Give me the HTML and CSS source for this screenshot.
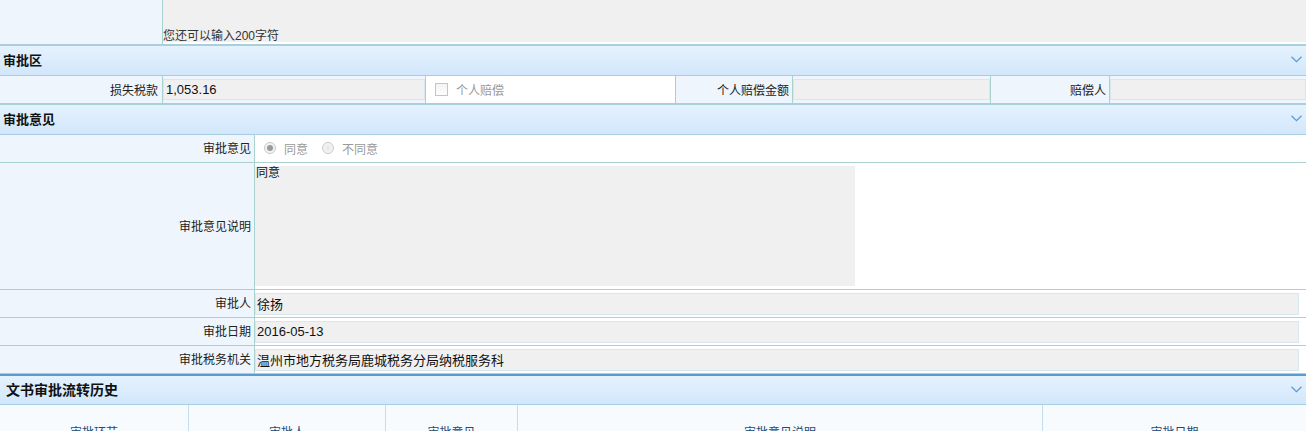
FILE: index.html
```html
<!DOCTYPE html>
<html lang="zh-CN">
<head>
<meta charset="utf-8">
<link rel="stylesheet" href="styles.css">
</head>
<body>
<div class="top-row">
  <div class="lbl top-lbl"></div>
  <div class="top-val"><span class="hint">您还可以输入200字符</span></div>
</div>

<div class="sec-head">
  <span class="sec-title">审批区</span>
  <svg class="chev" width="11" height="7" viewBox="0 0 11 7"><path d="M0.5 0.8 L5.5 5.6 L10.5 0.8" fill="none" stroke="#5b9bd5" stroke-width="1.3"/></svg>
</div>
<div class="row grid-a">
  <div class="lbl">损失税款</div>
  <div class="cell"><div class="inp">1,053.16</div></div>
  <div class="cell white chk-cell"><span class="chk"></span><span class="dis">个人赔偿</span></div>
  <div class="lbl">个人赔偿金额</div>
  <div class="cell"><div class="inp"></div></div>
  <div class="lbl">赔偿人</div>
  <div class="cell"><div class="inp"></div></div>
</div>

<div class="sec-head">
  <span class="sec-title">审批意见</span>
  <svg class="chev" width="11" height="7" viewBox="0 0 11 7"><path d="M0.5 0.8 L5.5 5.6 L10.5 0.8" fill="none" stroke="#5b9bd5" stroke-width="1.3"/></svg>
</div>
<div class="row grid-b h28">
  <div class="lbl">审批意见</div>
  <div class="cell white radios">
    <span class="radio on"></span><span class="dis">同意</span>
    <span class="radio"></span><span class="dis">不同意</span>
  </div>
</div>
<div class="row grid-b h127">
  <div class="lbl">审批意见说明</div>
  <div class="cell white ta-cell"><div class="ta">同意</div></div>
</div>
<div class="row grid-b h28">
  <div class="lbl">审批人</div>
  <div class="cell white"><div class="inp wide">徐扬</div></div>
</div>
<div class="row grid-b h28">
  <div class="lbl">审批日期</div>
  <div class="cell white"><div class="inp wide">2016-05-13</div></div>
</div>
<div class="row grid-b h28">
  <div class="lbl">审批税务机关</div>
  <div class="cell white"><div class="inp wide">温州市地方税务局鹿城税务分局纳税服务科</div></div>
</div>

<div class="sec-head hist">
  <span class="sec-title big">文书审批流转历史</span>
  <svg class="chev" width="11" height="7" viewBox="0 0 11 7"><path d="M0.5 0.8 L5.5 5.6 L10.5 0.8" fill="none" stroke="#5b9bd5" stroke-width="1.3"/></svg>
</div>
<div class="thead">
  <div class="th">审批环节</div>
  <div class="th">审批人</div>
  <div class="th">审批意见</div>
  <div class="th">审批意见说明</div>
  <div class="th">审批日期</div>
</div>
</body>
</html>
```

FILE: styles.css
```css
* { box-sizing: border-box; }
html, body { margin: 0; padding: 0; background: #fff; }
body {
  font-family: "Liberation Sans", Arial, "Noto Sans CJK SC", sans-serif;
  font-size: 12px;
  color: #222;
  overflow: hidden;
}

.top-row {
  display: grid;
  grid-template-columns: 163px 1fr;
  height: 46px;
  border-bottom: 2px solid #a9cfdc;
}
.top-lbl { border-right: 1px solid #a9d1cd; }
.top-val {
  background: #f0f0f0;
  margin-bottom: 2px;
  display: flex;
  align-items: flex-end;
  padding-bottom: 0;
}
.hint { color: #333; line-height: 12px; }

.sec-head {
  height: 30px;
  display: flex;
  align-items: center;
  justify-content: space-between;
  padding: 0 4px 2px 3px;
  background: linear-gradient(#e5f2fe, #d2e7fb);
  border-bottom: 1px solid #a7cde3;
}
.sec-title { font-weight: bold; font-size: 13px; color: #111; }
.sec-title.big { font-size: 14px; padding-left: 3px; }
.chev { margin-top: 0; }
.hist { border-top: 2px solid #5b9bd0; height: 31px; }

.row {
  display: grid;
  border-bottom: 1px solid #a9d1cd;
}
.grid-a {
  grid-template-columns: 163px 263px 250px 117px 198px 119px 1fr;
  height: 29px;
  border-bottom: 2px solid #a9cfdc;
}
.grid-b { grid-template-columns: 255px 1fr; }
.h28 { height: 28px; }
.h127 { height: 127px; }

.lbl {
  background: #eef5fc;
  border-right: 1px solid #a9d1cd;
  display: flex;
  align-items: center;
  justify-content: flex-end;
  padding-right: 3px;
  padding-bottom: 2px;
  color: #222;
}
.grid-a .lbl { padding-bottom: 0; }
.grid-a .lbl:first-child { padding-right: 4px; }
.cell {
  display: flex;
  align-items: center;
  background: #eef5fc;
  border-right: 1px solid #a9d1cd;
  padding: 0;
}
.cell:last-child { border-right: none; }
.white { background: #fff; }
.inp {
  flex: 1;
  height: 22px;
  background: #f0f0f0;
  border: 1px solid #d7e7ee;
  display: flex;
  align-items: center;
  padding-left: 2px;
  padding-bottom: 1px;
  color: #111;
  font-size: 13px;
}
.grid-a .inp { height: 21px; padding-bottom: 0; }
.inp.wide { margin-right: 7px; padding-left: 1px; }

.chk-cell { padding-left: 9px; }
.chk {
  width: 13px; height: 13px;
  border: 1px solid #c4c4c4;
  background: linear-gradient(#f4f4f4, #fdfdfd);
  margin-right: 8px;
}
.dis { color: #999; }

.radios { padding-left: 9px; padding-bottom: 1px; }
.radio {
  width: 12px; height: 12px;
  border-radius: 50%;
  border: 1px solid #c8c8c8;
  background: radial-gradient(circle, #e6e6e6 0, #f4f4f4 60%);
  margin-right: 8px;
  position: relative;
}
.radio.on::after {
  content: "";
  position: absolute;
  left: 2px; top: 2px;
  width: 6px; height: 6px;
  border-radius: 50%;
  background: #9a9a9a;
}
.radio + .dis { margin-right: 14px; }

.ta-cell { align-items: flex-start; padding-top: 3px; }
.ta {
  width: 600px;
  height: 120px;
  background: #f0f0f0;
  color: #111;
  line-height: 14px;
  padding-left: 1px;
}

.thead {
  display: grid;
  grid-template-columns: 189px 197px 132px 525px 1fr;
  height: 40px;
  background: #f8fbfe;
}
.th {
  border-right: 1px solid #c8dcec;
  text-align: center;
  padding-top: 18px;
  color: #244a78;
  font-size: 12px;
}
.th:last-child { border-right: none; }
```
